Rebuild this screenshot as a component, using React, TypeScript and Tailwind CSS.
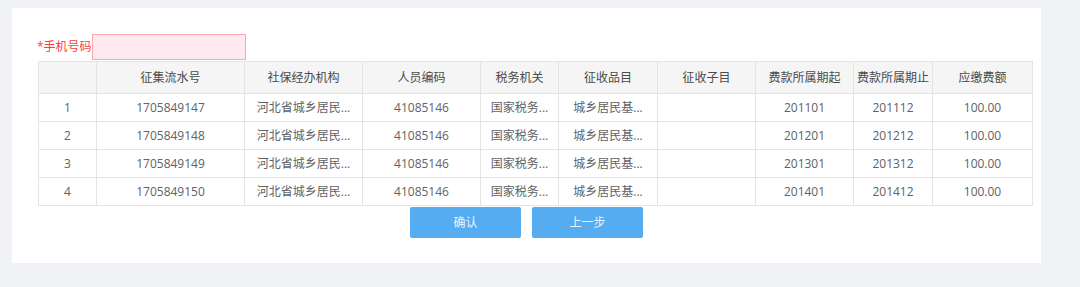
const cols = [58, 148, 118, 118, 78, 99, 98, 98, 79, 100];

const headers = [
  "",
  "征集流水号",
  "社保经办机构",
  "人员编码",
  "税务机关",
  "征收品目",
  "征收子目",
  "费款所属期起",
  "费款所属期止",
  "应缴费额",
];

const org = "河北省城乡居民...";
const tax = "国家税务...";
const item = "城乡居民基...";

const rows = [
  ["1", "1705849147", org, "41085146", tax, item, "", "201101", "201112", "100.00"],
  ["2", "1705849148", org, "41085146", tax, item, "", "201201", "201212", "100.00"],
  ["3", "1705849149", org, "41085146", tax, item, "", "201301", "201312", "100.00"],
  ["4", "1705849150", org, "41085146", tax, item, "", "201401", "201412", "100.00"],
];

export default function App() {
  return (
    <div
      className="h-[287px] w-[1080px] bg-[#f0f2f5] pt-2 pl-3"
      style={{ fontFamily: '"Open Sans", "Noto Sans CJK SC", sans-serif' }}
    >
      <div className="h-[255px] w-[1029px] bg-white pt-[26px]">
        {/* Phone field */}
        <div className="flex items-center pl-[25px]">
          <span className="text-[12px] leading-none text-[#ff3b3b]">*手机号码</span>
          <input
            className="h-[26px] w-[154px] border border-[#f8a8a6] bg-[#fde9ef] outline-none"
            type="text"
          />
        </div>

        {/* Table */}
        <table className="ml-[26px] mt-px w-[994px] table-fixed border-collapse text-[12px] text-[#606266]">
          <colgroup>
            {cols.map((w, i) => (
              <col key={i} style={{ width: w }} />
            ))}
          </colgroup>
          <thead>
            <tr className="bg-[#f5f5f5]">
              {headers.map((h, i) => (
                <th
                  key={i}
                  className="h-[32px] whitespace-nowrap border border-[#e4e4e4] p-0 text-center font-normal text-[#4a4a4a]"
                >
                  {h}
                </th>
              ))}
            </tr>
          </thead>
          <tbody>
            {rows.map((r, ri) => (
              <tr key={ri}>
                {r.map((c, ci) => (
                  <td
                    key={ci}
                    className="h-[28px] whitespace-nowrap border border-[#e4e4e4] p-0 text-center"
                  >
                    {c}
                  </td>
                ))}
              </tr>
            ))}
          </tbody>
        </table>

        {/* Actions */}
        <div className="mt-px flex justify-center gap-[11px]">
          <button className="h-[31px] w-[111px] rounded-[2px] bg-[#55acf1] text-[12px] text-[#eaf5ff]">
            确认
          </button>
          <button className="h-[31px] w-[111px] rounded-[2px] bg-[#55acf1] text-[12px] text-[#eaf5ff]">
            上一步
          </button>
        </div>
      </div>
    </div>
  );
}
